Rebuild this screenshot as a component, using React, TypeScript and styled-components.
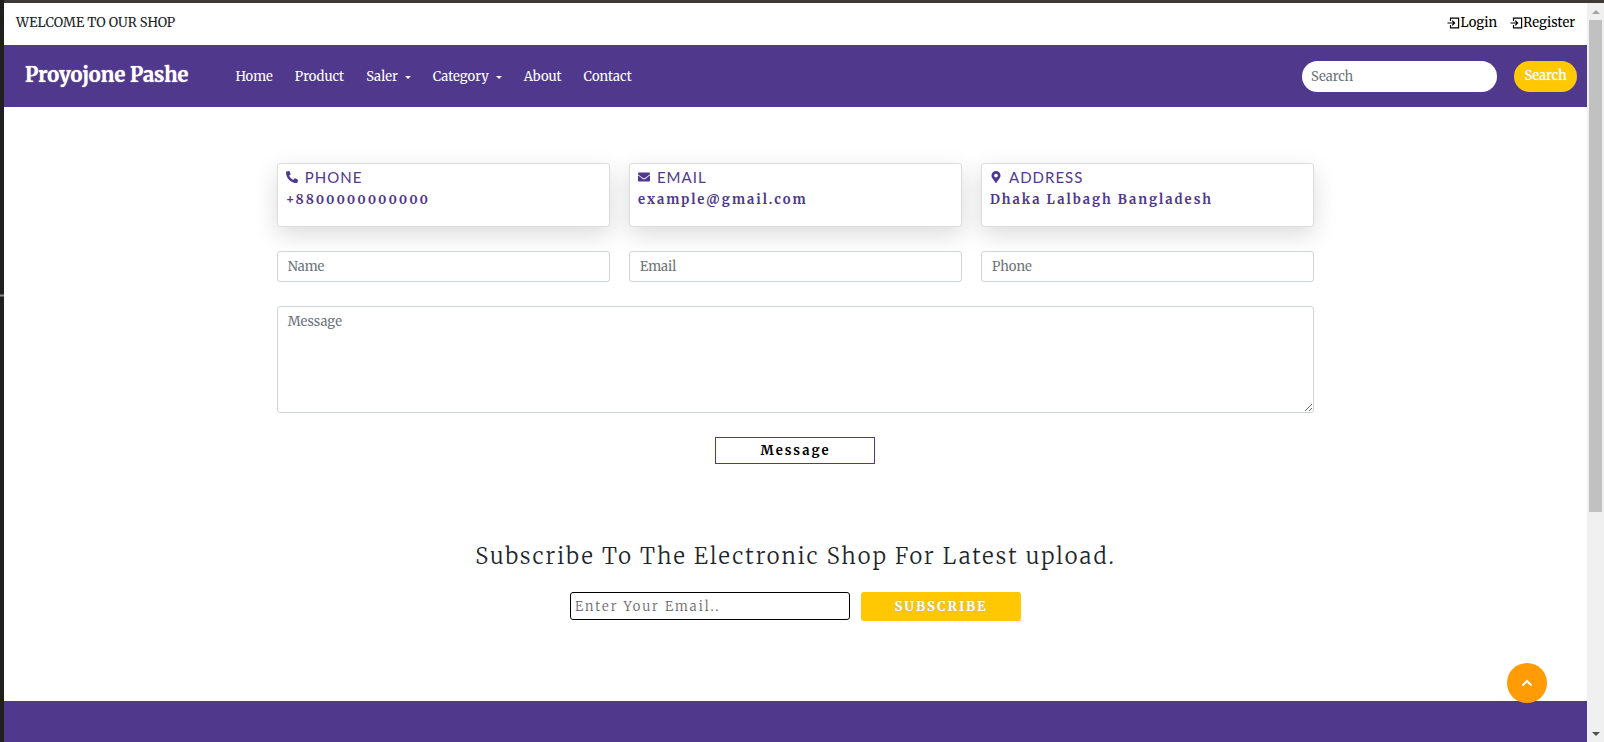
import React from "react";
import styled, { createGlobalStyle } from "styled-components";
import { FaPhoneAlt, FaEnvelope, FaMapMarkerAlt } from "react-icons/fa";

const purple = "#50388c";
const yellow = "#ffc803";
const serif = `Merriweather, "Noto Serif", "DejaVu Serif Condensed", serif`;

const GlobalStyle = createGlobalStyle`
  * { box-sizing: border-box; }
  body { margin: 0; background: #fff; color: #212529; font: 400 13px/20px ${serif}; overflow: hidden; }
  a { color: inherit; text-decoration: none; }
  button, input, textarea { font: inherit; margin: 0; }
  h1, h2, p { margin: 0; }
`;

const Frame = styled.div`
  display: flex;
  height: 100vh;
  background: #201f1e;
`;

const Edge = styled.div`
  flex: none;
  width: 4px;
  display: flex;
  flex-direction: column;
  padding-top: 294px;
`;

const Grip = styled.span`
  height: 3px;
  background: #8a8a8a;
  border: solid #555;
  border-width: 1px 0;
`;

const Viewport = styled.div`
  flex: 1;
  display: flex;
  min-width: 0;
  border-top: 3px solid #3b3a39;
`;

const Page = styled.div`
  flex: 1;
  min-width: 0;
  display: flex;
  flex-direction: column;
  overflow: hidden;
  background: #fff;
`;

const TopBar = styled.div`
  display: flex;
  justify-content: space-between;
  align-items: center;
  height: 42px;
  flex: none;
  padding: 0 12px 2px;
`;

const Account = styled.nav`
  display: flex;
  gap: 13px;
  color: #000;
`;

const AccountLink = styled.a`
  display: flex;
  align-items: center;
  svg { width: 13px; height: 12px; }
`;

const NavBar = styled.header`
  display: flex;
  align-items: center;
  flex: none;
  height: 62px;
  padding: 0 10px 0 21px;
  background: ${purple};
  color: #fff;
`;

const Brand = styled.a`
  font-size: 20px;
  font-weight: 700;
  line-height: 28px;
  padding-bottom: 2px;
  margin-right: 47px;
  text-shadow: 0 0 1px #fff;
`;

const Menu = styled.nav`
  display: flex;
  gap: 22px;
  flex: 1;
  padding-top: 2px;
`;

const MenuLink = styled.a<{ $drop?: boolean }>`
  display: flex;
  align-items: center;
  gap: 7px;
  &::after {
    content: ${(p) => (p.$drop ? `""` : "none")};
    border: 3px solid transparent;
    border-top-color: #fff;
    border-bottom: 0;
  }
`;

const SearchForm = styled.form`
  display: flex;
  gap: 17px;
`;

const SearchInput = styled.input`
  width: 195px;
  height: 31px;
  padding: 0 9px;
  border: 0;
  border-radius: 16px;
  background: #fff;
  &::placeholder { color: #6c757d; opacity: 1; }
`;

const SearchButton = styled.button`
  width: 63px;
  height: 31px;
  padding: 0;
  border: 0;
  border-radius: 16px;
  background: ${yellow};
  color: #fff;
  text-shadow: 0 0 1px #e8e4d4;
`;

const Contact = styled.main`
  width: 66.6667%;
  margin: 0 auto;
  padding: 56px 9px 0;
`;

const Grid = styled.div`
  display: grid;
  grid-template-columns: repeat(3, 1fr);
  gap: 24px 19px;
`;

const Card = styled.section`
  height: 64px;
  padding: 3px 8px;
  border: 1px solid #dcdcde;
  border-radius: 3px;
  background: #fff;
  color: ${purple};
  box-shadow: 0 8px 24px rgba(0, 0, 0, 0.14);
`;

const CardTitle = styled.h2`
  display: flex;
  align-items: center;
  gap: 7px;
  font: 400 15px/20px Lato, sans-serif;
  letter-spacing: 1px;
  svg { height: 12px; width: auto; }
`;

const CardValue = styled.p`
  font-weight: 700;
  line-height: 26px;
  letter-spacing: 2px;
  font-variant-numeric: oldstyle-nums;
`;

const Field = styled.input`
  width: 100%;
  height: 31px;
  padding: 0 10px;
  border: 1px solid #ced4da;
  border-radius: 3px;
  &::placeholder { color: #6c757d; opacity: 1; }
`;

const MessageBox = styled.textarea`
  grid-column: 1 / -1;
  width: 100%;
  height: 107px;
  padding: 5px 10px;
  border: 1px solid #ced4da;
  border-radius: 3px;
  &::placeholder { color: #6c757d; opacity: 1; }
`;

const MessageButton = styled.button`
  display: block;
  width: 160px;
  height: 27px;
  margin: 24px auto 0;
  padding: 0;
  border: 1px solid ${purple};
  background: #fff;
  color: #000;
  font-weight: 700;
  letter-spacing: 2px;
`;

const Subscribe = styled.section`
  flex: none;
  padding: 77px 0 80px;
  text-align: center;
`;

const SubscribeTitle = styled.h2`
  font-size: 22px;
  font-weight: 300;
  line-height: 30px;
  letter-spacing: 2px;
`;

const SubscribeForm = styled.form`
  display: flex;
  justify-content: center;
  gap: 11px;
  margin-top: 21px;
`;

const SubscribeInput = styled.input`
  width: 280px;
  height: 28px;
  padding: 0 4px;
  border: 1px solid #000;
  border-radius: 3px;
  font-weight: 300;
  letter-spacing: 2px;
  &::placeholder { color: #666; opacity: 1; }
`;

const SubscribeButton = styled.button`
  width: 160px;
  height: 29px;
  padding: 0;
  border: 0;
  border-radius: 3px;
  background: ${yellow};
  color: #fff;
  font-weight: 700;
  letter-spacing: 2px;
  text-shadow: 0 0 2px #b0b0b0;
`;

const Footer = styled.footer`
  flex: 1;
  background: ${purple};
`;

const ToTop = styled.button`
  position: fixed;
  right: 57px;
  bottom: 39px;
  display: grid;
  place-items: center;
  width: 40px;
  height: 40px;
  padding: 0;
  border: 0;
  border-radius: 50%;
  background: #ff9b05;
`;

const Scrollbar = styled.div`
  flex: none;
  width: 17px;
  display: flex;
  flex-direction: column;
  align-items: center;
  background: #f0f0f0;
`;

const Arrow = styled.span<{ $down?: boolean }>`
  display: grid;
  place-items: center;
  height: 17px;
  &::before {
    content: "";
    border: 4px solid transparent;
    ${(p) => (p.$down ? "border-top-color: #505050; border-bottom: 0;" : "border-bottom-color: #a3a3a3; border-top: 0;")}
  }
`;

const Track = styled.div`
  flex: 1;
`;

const Thumb = styled.div`
  width: 13px;
  height: 69.8%;
  background: #c1c1c1;
`;

const LoginIcon = () => (
  <svg viewBox="0 0 13 12" fill="none" stroke="currentColor" strokeWidth="1.2" aria-hidden="true">
    <path d="M3.5 4V1.2H11.6V10.8H3.5V8M0.5 6H7.5M5.2 3.6L7.6 6L5.2 8.4" />
  </svg>
);

const menu = [
  { label: "Home" },
  { label: "Product" },
  { label: "Saler", drop: true },
  { label: "Category", drop: true },
  { label: "About" },
  { label: "Contact" },
];

const details = [
  { icon: <FaPhoneAlt />, title: "PHONE", value: "+8800000000000" },
  { icon: <FaEnvelope />, title: "EMAIL", value: "example@gmail.com" },
  { icon: <FaMapMarkerAlt />, title: "ADDRESS", value: "Dhaka Lalbagh Bangladesh" },
];

export default function App() {
  return (
    <Frame>
      <GlobalStyle />
      <Edge><Grip /></Edge>
      <Viewport>
        <Page>
          <TopBar>
            <p>WELCOME TO OUR SHOP</p>
            <Account aria-label="Account">
              <AccountLink href="#login"><LoginIcon />Login</AccountLink>
              <AccountLink href="#register"><LoginIcon />Register</AccountLink>
            </Account>
          </TopBar>
          <NavBar>
            <Brand href="#">Proyojone Pashe</Brand>
            <Menu aria-label="Main">
              {menu.map((m) => (
                <MenuLink key={m.label} href={`#${m.label.toLowerCase()}`} $drop={m.drop}>{m.label}</MenuLink>
              ))}
            </Menu>
            <SearchForm role="search">
              <SearchInput type="search" placeholder="Search" aria-label="Search" />
              <SearchButton type="button">Search</SearchButton>
            </SearchForm>
          </NavBar>
          <Contact>
            <form>
              <Grid>
                {details.map((d) => (
                  <Card key={d.title}>
                    <CardTitle>{d.icon}{d.title}</CardTitle>
                    <CardValue>{d.value}</CardValue>
                  </Card>
                ))}
                <Field type="text" placeholder="Name" aria-label="Name" />
                <Field type="email" placeholder="Email" aria-label="Email" />
                <Field type="tel" placeholder="Phone" aria-label="Phone" />
                <MessageBox placeholder="Message" aria-label="Message" />
              </Grid>
              <MessageButton type="button">Message</MessageButton>
            </form>
          </Contact>
          <Subscribe>
            <SubscribeTitle>Subscribe To The Electronic Shop For Latest upload.</SubscribeTitle>
            <SubscribeForm>
              <SubscribeInput type="email" placeholder="Enter Your Email.." aria-label="Email address" />
              <SubscribeButton type="button">SUBSCRIBE</SubscribeButton>
            </SubscribeForm>
          </Subscribe>
          <Footer />
        </Page>
        <Scrollbar aria-hidden="true">
          <Arrow />
          <Track><Thumb /></Track>
          <Arrow $down />
        </Scrollbar>
      </Viewport>
      <ToTop type="button" aria-label="Back to top">
        <svg width="12" height="8" viewBox="0 0 12 8" fill="none" stroke="#fff" strokeWidth="2" aria-hidden="true">
          <path d="M1.5 6.5L6 2L10.5 6.5" />
        </svg>
      </ToTop>
    </Frame>
  );
}
